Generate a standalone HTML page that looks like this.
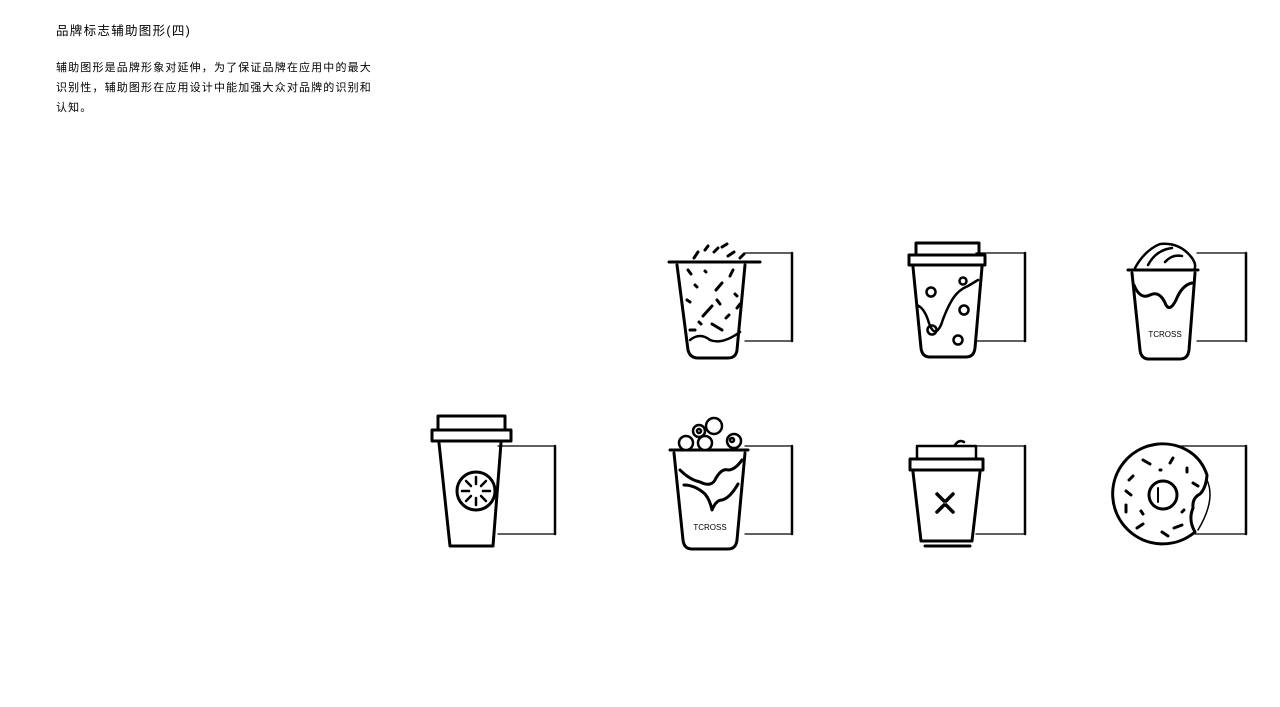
<!DOCTYPE html>
<html><head><meta charset="utf-8"><style>
html,body{margin:0;padding:0;background:#fff;width:1280px;height:707px;overflow:hidden}
.t{position:absolute;left:56px;font-family:"Liberation Sans","Noto Sans CJK SC",sans-serif;color:#000}
#h{top:20px;font-size:12.5px;letter-spacing:1.3px}
#p{top:58px;font-size:11px;line-height:20px;width:340px;letter-spacing:1.15px}
svg{position:absolute;left:0;top:0}
</style></head><body>
<div class="t" id="h">品牌标志辅助图形(四)</div>
<div class="t" id="p">辅助图形是品牌形象对延伸，为了保证品牌在应用中的最大<br>识别性，辅助图形在应用设计中能加强大众对品牌的识别和<br>认知。</div>
<svg width="1280" height="707" viewBox="0 0 1280 707" fill="none" stroke="#000" stroke-linecap="round" stroke-linejoin="round">
<g stroke-width="1.3">
<path d="M745 253 H792 V341 H745"/>
<path d="M976 253 H1025 V341 H976"/>
<path d="M1197 253 H1246 V341 H1197"/>
<path d="M498 446 H555 V534 H498"/>
<path d="M745 446 H792 V534 H745"/>
<path d="M976 446 H1025 V534 H976"/>
<path d="M1175 446 H1246 V534 H1195"/>
</g>
<g stroke-width="2.5">
<path d="M792 253 V341 M1025 253 V341 M1246 253 V341 M555 446 V534 M792 446 V534 M1025 446 V534 M1246 446 V534"/>
</g>
<path d="M669 262 H760" stroke-width="3"/>
<path d="M677 265 L688 350 Q690 358 698 358 H728 Q736 358 737 350 L745 265" stroke-width="3" fill="#fff"/>
<path d="M690 340 Q700 332 710 340 Q722 345 740 332" stroke-width="2.5"/>
<g stroke-width="3">
<path d="M694 258 L698 252 M705 250 L708 246 M714 252 L718 248 M722 247 L727 244 M728 256 L734 252 M740 258 L744 254"/>
<path d="M688 270 L691 274 M705 271 L706 272 M730 276 L733 270 M695 285 L697 287 M716 290 L722 283 M735 294 L737 296 M687 300 L690 302 M703 316 L712 306 M717 300 L720 304 M737 308 L740 304 M699 322 L701 324 M712 324 L722 330 M726 318 L729 315 M690 330 L695 330"/>
</g>
<path d="M916 253 V243 H979 V253" stroke-width="3"/>
<rect x="909" y="255" width="76" height="10" stroke-width="3" fill="#fff"/>
<path d="M913 267 L921 348 Q922 357 930 357 H966 Q974 357 975 348 L982 267" stroke-width="3"/>
<path d="M917 305 Q924 308 928 320 Q934 340 941 325 Q946 310 952 300 Q958 290 968 286 L978 280" stroke-width="2.5"/>
<g stroke-width="2.5"><circle cx="931" cy="292" r="4.5"/><circle cx="963" cy="281" r="3.5"/><circle cx="964" cy="310" r="4.5"/><circle cx="932" cy="330" r="4.5"/><circle cx="958" cy="340" r="4.5"/></g>
<path d="M1128 270 H1198" stroke-width="3"/>
<path d="M1132 273 L1140 350 Q1141 359 1149 359 H1180 Q1188 359 1189 350 L1195 273" stroke-width="3"/>
<path d="M1135 268 Q1145 250 1160 244 Q1180 242 1192 258 Q1197 265 1194 270 M1148 265 Q1156 250 1172 248 M1165 262 Q1172 254 1182 256" stroke-width="2.5"/>
<path d="M1134 285 Q1140 300 1150 295 Q1160 290 1166 305 Q1170 312 1176 300 Q1182 285 1192 283" stroke-width="3"/>
<text x="1165" y="337" font-family="Liberation Sans,sans-serif" font-size="8" fill="#000" stroke="none" text-anchor="middle">TCROSS</text>
<path d="M438 429 V416 H505 V429" stroke-width="3"/>
<rect x="432" y="430" width="79" height="11" stroke-width="3" fill="#fff"/>
<path d="M439 443 L450 546 H493 L501 443" stroke-width="3"/>
<circle cx="476" cy="491" r="19" stroke-width="3"/>
<g stroke-width="2.5"><path d="M476 477 V484 M476 498 V505 M462 491 H469 M483 491 H490 M466 481 L471 486 M481 496 L486 501 M466 501 L471 496 M481 486 L486 481"/></g>
<path d="M670 450 H748" stroke-width="3"/>
<path d="M674 453 L683 540 Q684 549 692 549 H728 Q736 549 737 540 L745 453" stroke-width="3"/>
<g stroke-width="2.5" fill="#fff"><circle cx="714" cy="426" r="8"/><circle cx="699" cy="431" r="6"/><circle cx="686" cy="443" r="7"/><circle cx="705" cy="443" r="7"/><circle cx="734" cy="441" r="7"/><circle cx="732" cy="440" r="2"/><circle cx="699" cy="431" r="2"/></g>
<path d="M680 470 Q690 480 700 482 Q712 488 716 478 Q722 468 728 470 Q735 470 742 460 M684 485 Q695 485 705 494 Q710 500 712 510 Q716 500 722 500 Q730 498 738 484" stroke-width="3"/>
<text x="710" y="530" font-family="Liberation Sans,sans-serif" font-size="8" fill="#000" stroke="none" text-anchor="middle">TCROSS</text>
<path d="M917 458 V446 H976 V458" stroke-width="2.5"/>
<path d="M955 445 Q959 439 964 442" stroke-width="2.5"/>
<rect x="910" y="459" width="73" height="11" stroke-width="3" fill="#fff"/>
<path d="M913 472 L921 541 H972 L980 472" stroke-width="3"/>
<path d="M925 546 H970" stroke-width="3"/>
<path d="M937 494 L944 501 M953 494 L946 501 M937 512 L944 505 M953 512 L946 505" stroke-width="3.5"/>
<path d="M1190 452 A50 50 0 1 0 1195 532 Q1188 520 1193 508 Q1192 498 1200 494 Q1206 488 1207 475 Q1202 460 1190 452" stroke-width="3"/>
<path d="M1207 480 Q1216 500 1198 530" stroke-width="1.5"/>
<ellipse cx="1163" cy="495" rx="14" ry="14" stroke-width="3"/>
<path d="M1158 488 V502" stroke-width="2"/>
<g stroke-width="3"><path d="M1143 460 L1150 464 M1170 463 L1173 458 M1160 470 L1161 470 M1187 468 V472 M1129 480 L1133 476 M1126 491 L1131 495 M1193 483 L1198 486 M1126 505 V512 M1141 511 L1143 514 M1184 510 L1182 512 M1143 524 L1137 528 M1162 532 L1168 536 M1174 528 L1182 525"/></g>
</svg>
</body></html>
